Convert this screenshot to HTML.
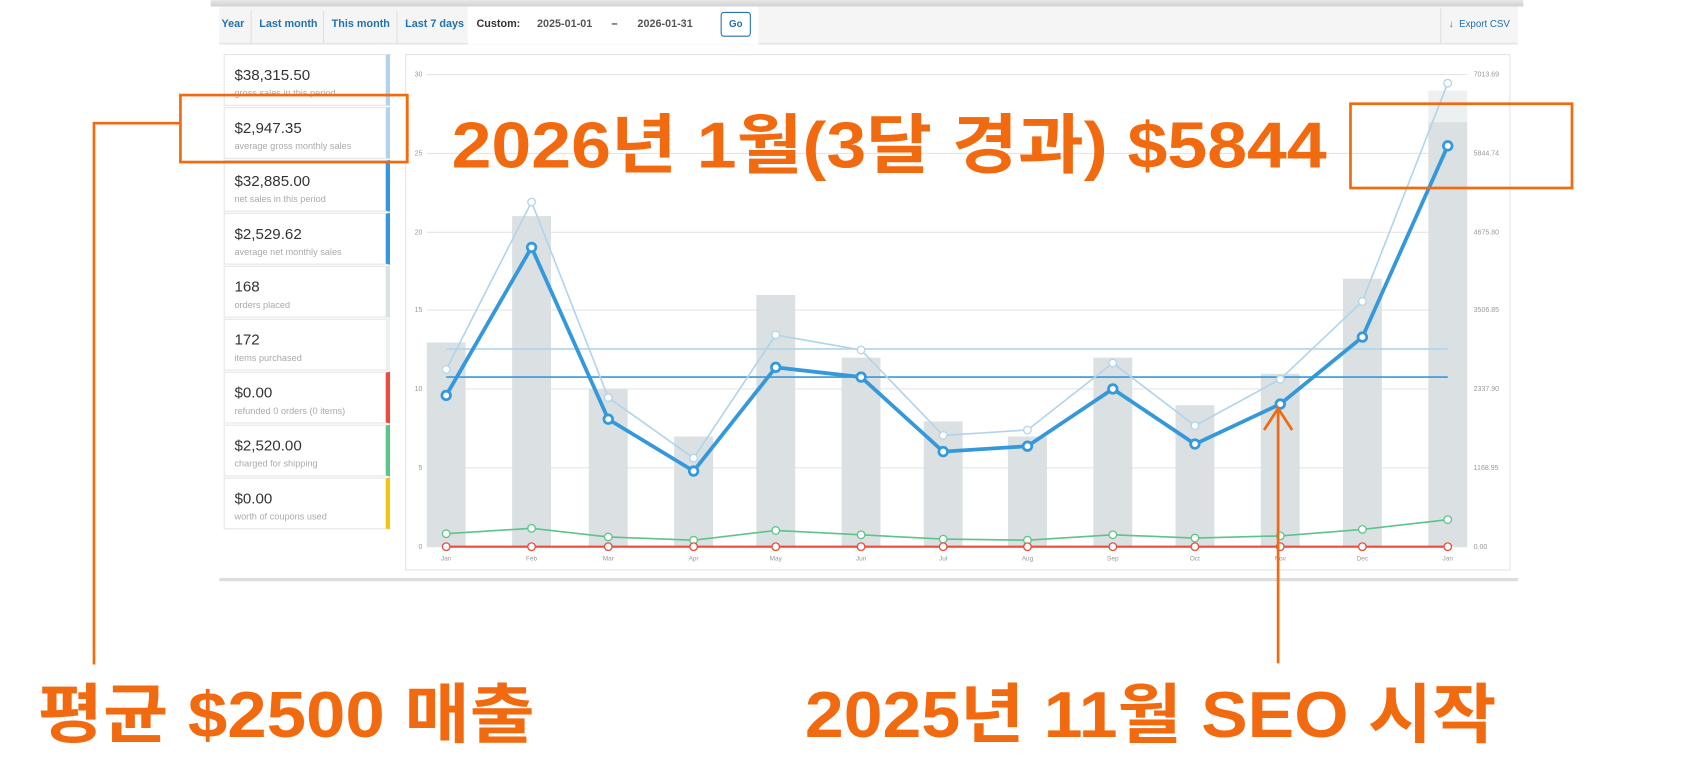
<!DOCTYPE html>
<html><head><meta charset="utf-8"><style>
html,body{margin:0;padding:0;background:#fff;width:1694px;height:761px;overflow:hidden}
#w{position:absolute;left:0;top:0;width:1568px;height:705px;transform:scale(1.0804);transform-origin:0 0;font-family:"Liberation Sans",sans-serif}
.t{position:absolute;font-size:10px;font-weight:bold;color:#2271b1;top:17px}
.leg{position:absolute;left:207px;width:154px;height:48px;border:1px solid #e5e5e5;border-right:4px solid #ccc;box-sizing:border-box;background:#fff}
.leg b{position:absolute;left:9px;top:10px;font-weight:normal;font-size:14px;color:#333}
.leg i{position:absolute;left:9px;top:30px;font-style:normal;font-size:8.5px;color:#aaa}
</style></head><body><div id="w">
<div style="position:absolute;left:195px;top:0;width:1215px;height:6px;background:linear-gradient(#e8e8e8,#d0d0d0)"></div>
<div style="position:absolute;left:203px;top:6px;width:1202px;height:34px;background:#f5f5f5;border-bottom:1px solid #ddd"></div>
<div style="position:absolute;left:433px;top:6px;width:269px;height:35px;background:#fff"></div>
<div style="position:absolute;left:232px;top:10px;width:1px;height:30px;background:#e0e0e0"></div>
<div style="position:absolute;left:299px;top:10px;width:1px;height:30px;background:#e0e0e0"></div>
<div style="position:absolute;left:367px;top:10px;width:1px;height:30px;background:#e0e0e0"></div>
<div style="position:absolute;left:1333px;top:8px;width:1px;height:32px;background:#e0e0e0"></div>
<span class="t" style="left:205px">Year</span><span class="t" style="left:240px">Last month</span><span class="t" style="left:307px">This month</span><span class="t" style="left:375px">Last 7 days</span>
<span class="t" style="left:441px;color:#333">Custom:</span>
<span class="t" style="left:497px;color:#555">2025-01-01</span><span class="t" style="left:566px;color:#333">–</span><span class="t" style="left:590px;color:#555">2026-01-31</span>
<div style="position:absolute;left:667px;top:11px;width:26px;height:21px;border:1px solid #2271b1;border-radius:3px;font-size:9px;font-weight:bold;color:#2271b1;text-align:center;line-height:21px">Go</div>
<span class="t" style="left:1341px;font-weight:normal;font-size:9px">↓ &nbsp;Export CSV</span>
<div style="position:absolute;left:203px;top:535px;width:1202px;height:3px;background:#ddd"></div>

<div class="leg" style="top:50px;border-right-color:#b1d4ea"><b>$38,315.50</b><i>gross sales in this period</i></div>
<div class="leg" style="top:99px;border-right-color:#b1d4ea"><b>$2,947.35</b><i>average gross monthly sales</i></div>
<div class="leg" style="top:148px;border-right-color:#3498db"><b>$32,885.00</b><i>net sales in this period</i></div>
<div class="leg" style="top:197px;border-right-color:#3498db"><b>$2,529.62</b><i>average net monthly sales</i></div>
<div class="leg" style="top:246px;border-right-color:#dbe1e3"><b>168</b><i>orders placed</i></div>
<div class="leg" style="top:295px;border-right-color:#ecf0f1"><b>172</b><i>items purchased</i></div>
<div class="leg" style="top:344px;border-right-color:#e74c3c"><b>$0.00</b><i>refunded 0 orders (0 items)</i></div>
<div class="leg" style="top:393px;border-right-color:#5cc488"><b>$2,520.00</b><i>charged for shipping</i></div>
<div class="leg" style="top:442px;border-right-color:#f1c40f"><b>$0.00</b><i>worth of coupons used</i></div>

<svg style="position:absolute;left:0;top:0" width="1568" height="705" font-family="Liberation Sans,sans-serif">
<rect x="375.5" y="50.5" width="1022" height="477" fill="#fff" stroke="#e5e5e5"/>
<g stroke="#e5e5e5" stroke-width="1">
<line x1="395" x2="1358" y1="69" y2="69"/><line x1="395" x2="1358" y1="142" y2="142"/><line x1="395" x2="1358" y1="215" y2="215"/><line x1="395" x2="1358" y1="287" y2="287"/><line x1="395" x2="1358" y1="360" y2="360"/><line x1="395" x2="1358" y1="433" y2="433"/><line x1="395" x2="1358" y1="506" y2="506"/>
</g>
<g font-size="6.5" fill="#999" text-anchor="end">
<text x="391" y="71">30</text><text x="391" y="144">25</text><text x="391" y="217">20</text><text x="391" y="289">15</text><text x="391" y="362">10</text><text x="391" y="435">5</text><text x="391" y="508">0</text>
</g>
<g font-size="6.5" fill="#999">
<text x="1364" y="71">7013.69</text><text x="1364" y="144">5844.74</text><text x="1364" y="217">4675.80</text><text x="1364" y="289">3506.85</text><text x="1364" y="362">2337.90</text><text x="1364" y="435">1168.95</text><text x="1364" y="508">0.00</text>
</g>
<g fill="#dbe1e3">
<rect x="395" y="317" width="36" height="189"/><rect x="474" y="200" width="36" height="306"/><rect x="545" y="360" width="36" height="146"/><rect x="624" y="404" width="36" height="102"/><rect x="700" y="273" width="36" height="233"/><rect x="779" y="331" width="36" height="175"/><rect x="855" y="390" width="36" height="116"/><rect x="933" y="404" width="36" height="102"/><rect x="1012" y="331" width="36" height="175"/><rect x="1088" y="375" width="36" height="131"/><rect x="1167" y="346" width="36" height="160"/><rect x="1243" y="258" width="36" height="248"/><rect x="1322" y="113" width="36" height="393"/>
</g>
<rect x="1322" y="84" width="36" height="29" fill="#ecf0f1"/>
<g font-size="6" fill="#999" text-anchor="middle">
<text x="413" y="519">Jan</text><text x="492" y="519">Feb</text><text x="563" y="519">Mar</text><text x="642" y="519">Apr</text><text x="718" y="519">May</text><text x="797" y="519">Jun</text><text x="873" y="519">Jul</text><text x="951" y="519">Aug</text><text x="1030" y="519">Sep</text><text x="1106" y="519">Oct</text><text x="1185" y="519">Nov</text><text x="1261" y="519">Dec</text><text x="1340" y="519">Jan</text>
</g>
<line x1="413" x2="1340" y1="323" y2="323" stroke="#b1d4ea" stroke-width="1.5"/>
<line x1="413" x2="1340" y1="349" y2="349" stroke="#3498db" stroke-width="1.5"/>
<g fill="#fff">
<polyline fill="none" stroke="#b1d4ea" stroke-width="1.5" points="413,342 492,187 563,368 642,424 718,310 797,324 873,403 951,398 1030,336 1106,394 1185,351 1261,279 1340,77"/>
<g stroke="#b1d4ea" stroke-width="1.2"><circle cx="413" cy="342" r="3.5"/><circle cx="492" cy="187" r="3.5"/><circle cx="563" cy="368" r="3.5"/><circle cx="642" cy="424" r="3.5"/><circle cx="718" cy="310" r="3.5"/><circle cx="797" cy="324" r="3.5"/><circle cx="873" cy="403" r="3.5"/><circle cx="951" cy="398" r="3.5"/><circle cx="1030" cy="336" r="3.5"/><circle cx="1106" cy="394" r="3.5"/><circle cx="1185" cy="351" r="3.5"/><circle cx="1261" cy="279" r="3.5"/><circle cx="1340" cy="77" r="3.5"/></g>
<polyline fill="none" stroke="#3498db" stroke-width="3.5" points="413,366 492,229 563,388 642,436 718,340 797,349 873,418 951,413 1030,360 1106,411 1185,374 1261,312 1340,135"/>
<g stroke="#3498db" stroke-width="2.5"><circle cx="413" cy="366" r="4"/><circle cx="492" cy="229" r="4"/><circle cx="563" cy="388" r="4"/><circle cx="642" cy="436" r="4"/><circle cx="718" cy="340" r="4"/><circle cx="797" cy="349" r="4"/><circle cx="873" cy="418" r="4"/><circle cx="951" cy="413" r="4"/><circle cx="1030" cy="360" r="4"/><circle cx="1106" cy="411" r="4"/><circle cx="1185" cy="374" r="4"/><circle cx="1261" cy="312" r="4"/><circle cx="1340" cy="135" r="4"/></g>
<polyline fill="none" stroke="#5cc488" stroke-width="1.5" points="413,494 492,489 563,497 642,500 718,491 797,495 873,499 951,500 1030,495 1106,498 1185,496 1261,490 1340,481"/>
<g stroke="#5cc488" stroke-width="1.2"><circle cx="413" cy="494" r="3.5"/><circle cx="492" cy="489" r="3.5"/><circle cx="563" cy="497" r="3.5"/><circle cx="642" cy="500" r="3.5"/><circle cx="718" cy="491" r="3.5"/><circle cx="797" cy="495" r="3.5"/><circle cx="873" cy="499" r="3.5"/><circle cx="951" cy="500" r="3.5"/><circle cx="1030" cy="495" r="3.5"/><circle cx="1106" cy="498" r="3.5"/><circle cx="1185" cy="496" r="3.5"/><circle cx="1261" cy="490" r="3.5"/><circle cx="1340" cy="481" r="3.5"/></g>
<line x1="413" x2="1340" y1="506" y2="506" stroke="#e74c3c" stroke-width="2"/>
<g stroke="#e74c3c" stroke-width="1.2"><circle cx="413" cy="506" r="3.5"/><circle cx="492" cy="506" r="3.5"/><circle cx="563" cy="506" r="3.5"/><circle cx="642" cy="506" r="3.5"/><circle cx="718" cy="506" r="3.5"/><circle cx="797" cy="506" r="3.5"/><circle cx="873" cy="506" r="3.5"/><circle cx="951" cy="506" r="3.5"/><circle cx="1030" cy="506" r="3.5"/><circle cx="1106" cy="506" r="3.5"/><circle cx="1185" cy="506" r="3.5"/><circle cx="1261" cy="506" r="3.5"/><circle cx="1340" cy="506" r="3.5"/></g>
</g>
<g stroke="#f26a10" fill="none">
<rect x="167" y="88" width="210" height="62" stroke-width="2.5"/>
<rect x="1250" y="96" width="205" height="78" stroke-width="2.5"/>
<polyline points="167,114 87,114 87,615" stroke-width="2.5"/>
<line x1="1183" y1="614" x2="1183" y2="380" stroke-width="2.5"/>
<polyline points="1170,398 1183,378 1196,398" stroke-width="2.5"/>
</g>
<g fill="#f26a10" font-family="Liberation Sans,Noto Sans CJK KR,sans-serif" font-weight="bold">
<text x="418" y="155" font-size="60" textLength="810" lengthAdjust="spacingAndGlyphs">2026년 1월(3달 경과) $5844</text>
<text x="35" y="682" font-size="60" textLength="460" lengthAdjust="spacingAndGlyphs">평균 $2500 매출</text>
<text x="745" y="682" font-size="60" textLength="640" lengthAdjust="spacingAndGlyphs">2025년 11월 SEO 시작</text>
</g>
</svg>
</div></body></html>
